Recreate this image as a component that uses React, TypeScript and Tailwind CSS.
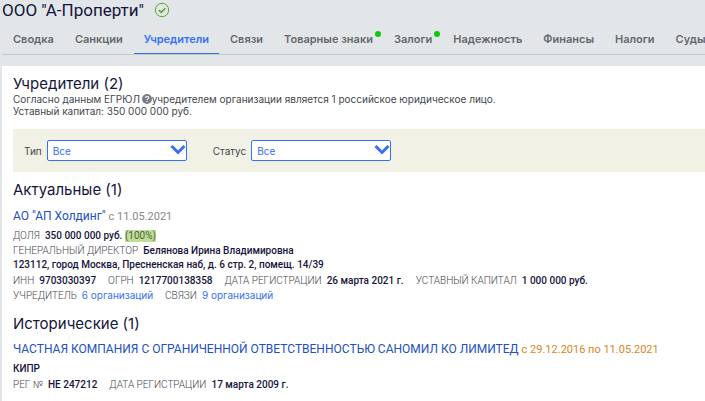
import React from 'react';

interface Tab {
  label: string;
  active?: boolean;
  marked?: boolean;
}

const TABS: Tab[] = [
  { label: 'Сводка' },
  { label: 'Санкции' },
  { label: 'Учредители', active: true },
  { label: 'Связи' },
  { label: 'Товарные знаки', marked: true },
  { label: 'Залоги', marked: true },
  { label: 'Надежность' },
  { label: 'Финансы' },
  { label: 'Налоги' },
  { label: 'Суды' },
];

const SectionTitle: React.FC<{ children: React.ReactNode }> = ({ children }) => (
  <h2 className="font-['Inter','Liberation_Sans',sans-serif] text-[15px] leading-[18px] text-[#15143c]">
    {children}
  </h2>
);

const Field: React.FC<{ label: string; children: React.ReactNode }> = ({ label, children }) => (
  <div className="flex gap-[5px]">
    <dt className="font-light text-[#43474b] uppercase">{label}</dt>
    <dd className="font-medium text-[#15143c]">{children}</dd>
  </div>
);

const CountLink: React.FC<{ children: React.ReactNode }> = ({ children }) => (
  <a href="#" className="font-['Inter','Liberation_Sans',sans-serif] leading-3 font-normal text-[#3570f5]">
    {children}
  </a>
);

const FilterSelect: React.FC<{ id: string; label: string }> = ({ id, label }) => (
  <div className="flex items-center gap-[5px]">
    <label htmlFor={id}>{label}</label>
    <div className="relative">
      <select
        id={id}
        className="block h-[21px] w-[140px] appearance-none rounded-[2px] border border-[#3570f5] bg-white pl-[5px] text-[10px] text-[#3570f5]"
      >
        <option>Все</option>
      </select>
      <svg
        viewBox="0 0 16 10"
        className="pointer-events-none absolute top-[5px] right-[1px] h-[10px] w-[16px]"
        fill="none"
        stroke="#3570f5"
        strokeWidth="3"
      >
        <path d="M1.5 1 8 7.5 14.5 1" />
      </svg>
    </div>
  </div>
);

export default function App() {
  return (
    <div className="min-h-screen overflow-hidden bg-[#e2e6e9] pl-[2px] font-['Roboto','Liberation_Sans',sans-serif] text-[#43474b]">
      <header>
        <div className="flex h-5 items-center gap-[10px]">
          <h1 className="text-[17px] leading-5 text-[#15143c]">ООО "А-Проперти"</h1>
          <svg viewBox="0 0 16 16" className="h-4 w-4" fill="none" stroke="#5ba926">
            <circle cx="8" cy="8" r="6.7" strokeWidth="1" />
            <path d="M4.8 8.2 7.2 10.3 11.3 6.2" strokeWidth="1.6" />
          </svg>
        </div>

        <nav className="mt-[5px] flex h-[30px] gap-px border-b border-[#c5c8ca] pl-px font-['Inter','Liberation_Sans',sans-serif] text-[11px] font-semibold whitespace-nowrap text-[#65696c]">
          {TABS.map(tab => (
            <a
              key={tab.label}
              href="#"
              className={[
                'relative flex shrink-0 items-center border-b px-[10px]',
                tab.active ? 'border-[#3570f5] text-[#3570f5]' : 'border-transparent',
              ].join(' ')}
            >
              {tab.label}
              {tab.marked && (
                <span className="absolute top-[6px] right-[2px] h-[6px] w-[6px] rounded-full bg-[#0dc80d]" />
              )}
            </a>
          ))}
        </nav>
      </header>

      <main className="mt-[11px] min-h-[calc(100vh-66px)] bg-white pt-[9px] pl-[11px] text-[10px] leading-3 whitespace-nowrap">
        <SectionTitle>Учредители (2)</SectionTitle>
        <div className="font-['Inter','Liberation_Sans',sans-serif]">
          <p>
            Согласно данным ЕГРЮЛ{' '}
            <svg viewBox="0 0 10 10" className="-ml-px inline-block h-[10px] w-[10px] align-[-1px]">
              <circle cx="5" cy="5" r="5" fill="#787e88" />
              <path d="M3.5 4C3.5 2 6.7 2 6.7 3.8 6.7 5 5 4.8 5 6.1" fill="none" stroke="#fff" strokeWidth="1.1" />
              <circle cx="5" cy="7.6" r=".7" fill="#fff" />
            </svg>
            учредителем организации является 1 российское юридическое лицо.
          </p>
          <p>Уставный капитал: 350 000 000 руб.</p>
        </div>

        <div className="mt-3 flex h-[43px] items-center gap-[26px] bg-[#f1f1e5] pl-[11px] font-['Inter','Liberation_Sans',sans-serif]">
          <FilterSelect id="type" label="Тип" />
          <FilterSelect id="status" label="Статус" />
        </div>

        <section className="pt-[9px]">
          <SectionTitle>Актуальные (1)</SectionTitle>
          <h3 className="mt-[9px] text-[12px] leading-4 text-[#888]">
            <a href="#" className="text-[#2350bd]">АО "АП Холдинг"</a>{' '}
            <span className="text-[11px] leading-3">с 11.05.2021</span>
          </h3>
          <dl className="mt-1 leading-[15px]">
            <Field label="Доля">
              350 000 000 руб.{' '}
              <span className="inline-block bg-[#bfdf98] leading-3 font-normal text-[#50643d]">(100%)</span>
            </Field>
            <Field label="Генеральный директор">Белянова Ирина Владимировна</Field>
          </dl>
          <p className="leading-[14px] font-medium text-[#15143c]">
            123112, город Москва, Пресненская наб, д. 6 стр. 2, помещ. 14/39
          </p>
          <dl className="mt-px flex flex-wrap gap-x-3 leading-[15px]">
            <Field label="ИНН">9703030397</Field>
            <Field label="ОГРН">1217700138358</Field>
            <Field label="Дата регистрации">26 марта 2021 г.</Field>
            <Field label="Уставный капитал">1 000 000 руб.</Field>
          </dl>
          <dl className="flex gap-x-3 leading-[15px]">
            <Field label="Учредитель">
              <CountLink>6 организаций</CountLink>
            </Field>
            <Field label="Связи">
              <CountLink>9 организаций</CountLink>
            </Field>
          </dl>
        </section>

        <section className="pt-3">
          <SectionTitle>Исторические (1)</SectionTitle>
          <h3 className="mt-2 text-[12px] leading-4 text-[#dc8420]">
            <a href="#" className="text-[#2350bd]">
              ЧАСТНАЯ КОМПАНИЯ С ОГРАНИЧЕННОЙ ОТВЕТСТВЕННОСТЬЮ САНОМИЛ КО ЛИМИТЕД
            </a>{' '}
            <span className="text-[11px] leading-3">с 29.12.2016 по 11.05.2021</span>
          </h3>
          <p className="mt-1 leading-[15px] font-medium text-[#15143c]">КИПР</p>
          <dl className="mt-px flex gap-x-3 leading-[15px]">
            <Field label="Рег №">HE 247212</Field>
            <Field label="Дата регистрации">17 марта 2009 г.</Field>
          </dl>
        </section>
      </main>
    </div>
  );
}
